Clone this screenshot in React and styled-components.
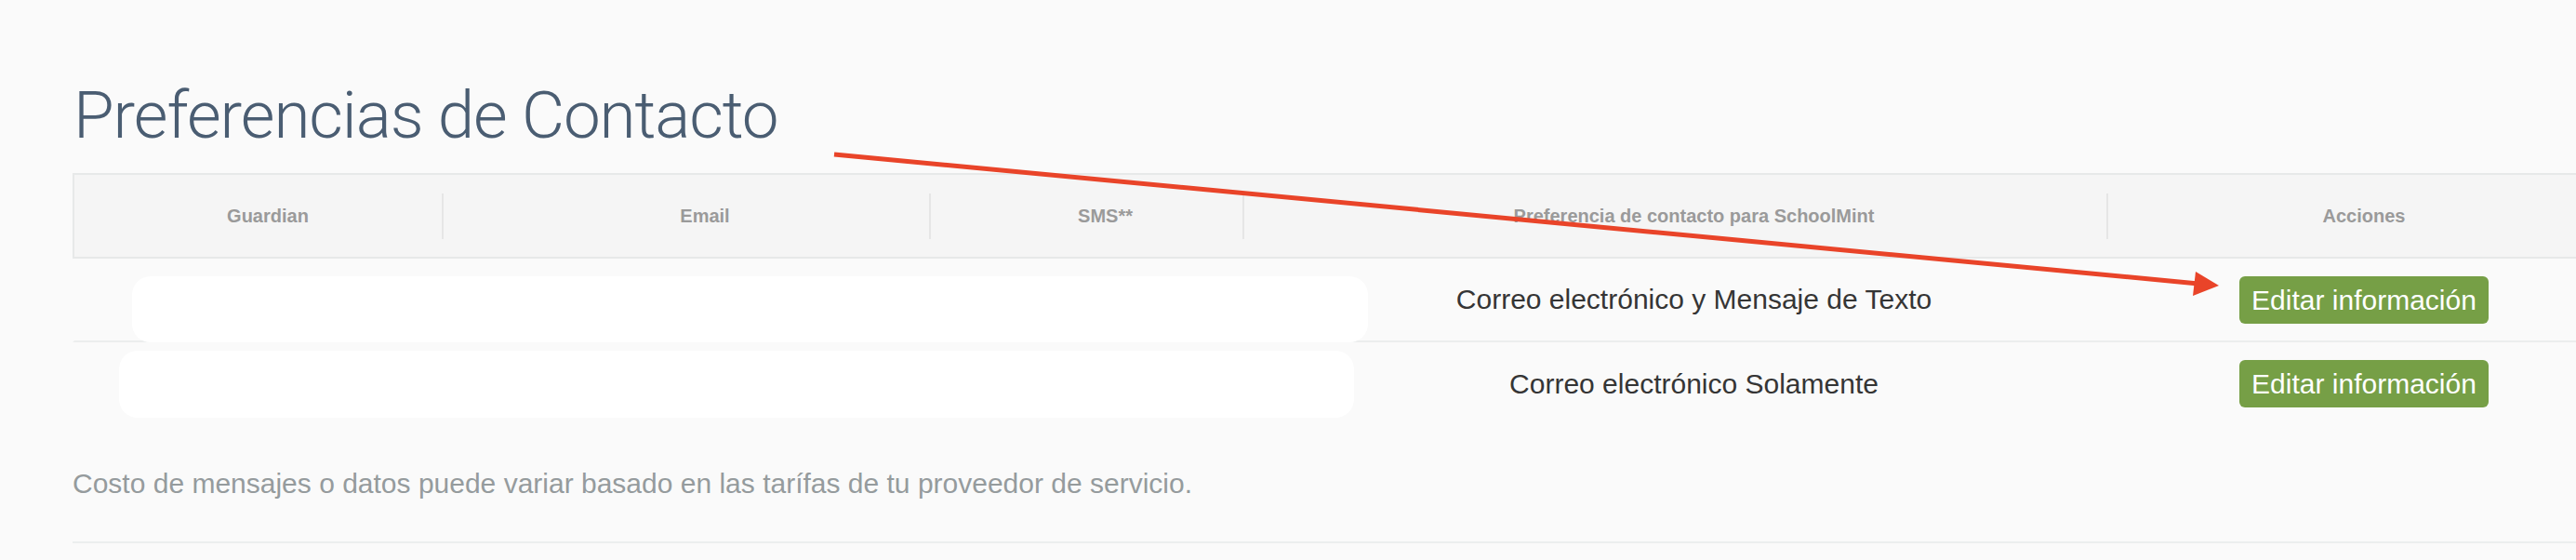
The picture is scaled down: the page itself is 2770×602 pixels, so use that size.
import React from 'react';
import styled, { createGlobalStyle, css } from 'styled-components';

const GlobalStyle = createGlobalStyle`
  html, body {
    margin: 0;
    padding: 0;
    background: #fafafa;
    overflow: hidden;
  }
  body {
    font-family: "Liberation Sans", Arial, sans-serif;
  }
`;

const COLS = '416px 524px 337px 929px 512px';

const Page = styled.div`
  position: relative;
  width: 2770px;
  height: 602px;
  padding-left: 78px;
  box-sizing: border-box;
  overflow: hidden;
`;

const Title = styled.h1`
  margin: 0 0 0 1px;
  padding-top: 85px;
  font-family: Roboto, "Liberation Sans", sans-serif;
  font-weight: 300;
  font-size: 71px;
  letter-spacing: -1.1px;
  line-height: 78px;
  color: #4a5d72;
`;

const Table = styled.div`
  margin-top: 23px;
  width: 2720px;
`;

const HeaderRow = styled.div`
  display: grid;
  grid-template-columns: ${COLS};
  height: 88px;
  background: #f5f5f5;
  border: 2px solid #e7e9e9;
  border-right: none;
`;

const HeaderCell = styled.div`
  position: relative;
  display: flex;
  align-items: center;
  justify-content: center;
  font-weight: 700;
  font-size: 20px;
  color: #9a9a9a;
  white-space: nowrap;
  ${(p) =>
    p.$divider &&
    css`
      &::after {
        content: '';
        position: absolute;
        right: 19px;
        top: 20px;
        bottom: 19px;
        width: 2px;
        background: #e6e6e6;
      }
    `}
`;

const BodyRow = styled.div`
  position: relative;
  display: grid;
  grid-template-columns: ${COLS};
  height: ${(p) => p.$h}px;
  border-left: 2px solid transparent;
  border-bottom: ${(p) => (p.$last ? 'none' : '2px solid #eceeee')};
`;

const Cell = styled.div`
  display: flex;
  align-items: center;
  justify-content: center;
  font-size: 30px;
  color: #353535;
  white-space: nowrap;
`;

const Redaction = styled.div`
  position: absolute;
  background: #ffffff;
  border-radius: 20px;
`;

const EditButton = styled.button`
  font-family: "Liberation Sans", Arial, sans-serif;
  font-size: 30px;
  line-height: 43px;
  padding: 4px 13px;
  color: #ffffff;
  background: #769f46;
  border: none;
  border-radius: 6px;
  cursor: pointer;
  white-space: nowrap;
`;

const Footnote = styled.p`
  margin: 42px 0 0;
  font-size: 30px;
  line-height: 42px;
  color: #959b9d;
`;

const Rule = styled.div`
  margin-top: 41px;
  width: 2720px;
  height: 2px;
  background: #eceeee;
`;

const Annotation = styled.svg`
  position: absolute;
  left: 0;
  top: 0;
  pointer-events: none;
`;

const headers = [
  'Guardian',
  'Email',
  'SMS**',
  'Preferencia de contacto para SchoolMint',
  'Acciones',
];

const rows = [
  {
    pref: 'Correo electrónico y Mensaje de Texto',
    h: 88,
    redact: { left: 62, top: 19, width: 1329, height: 71 },
  },
  {
    pref: 'Correo electrónico Solamente',
    h: 89,
    redact: { left: 48, top: 9, width: 1328, height: 72 },
    last: true,
  },
];

export default function App() {
  return (
    <>
      <GlobalStyle />
      <Page>
        <Title>Preferencias de Contacto</Title>
        <Table>
          <HeaderRow>
            {headers.map((h, i) => (
              <HeaderCell key={h} $divider={i < headers.length - 1}>
                {h}
              </HeaderCell>
            ))}
          </HeaderRow>
          {rows.map((r) => (
            <BodyRow key={r.pref} $h={r.h} $last={r.last}>
              <Cell />
              <Cell />
              <Cell />
              <Cell>{r.pref}</Cell>
              <Cell>
                <EditButton>Editar información</EditButton>
              </Cell>
              <Redaction style={r.redact} />
            </BodyRow>
          ))}
        </Table>
        <Footnote>
          Costo de mensajes o datos puede variar basado en las tarífas de tu proveedor de servicio.
        </Footnote>
        <Rule />
        <Annotation width="2770" height="602" viewBox="0 0 2770 602">
          <line x1="897" y1="166" x2="2364" y2="305" stroke="#e94429" strokeWidth="5" />
          <polygon points="2386,307 2361,292 2358,318" fill="#e94429" />
        </Annotation>
      </Page>
    </>
  );
}
